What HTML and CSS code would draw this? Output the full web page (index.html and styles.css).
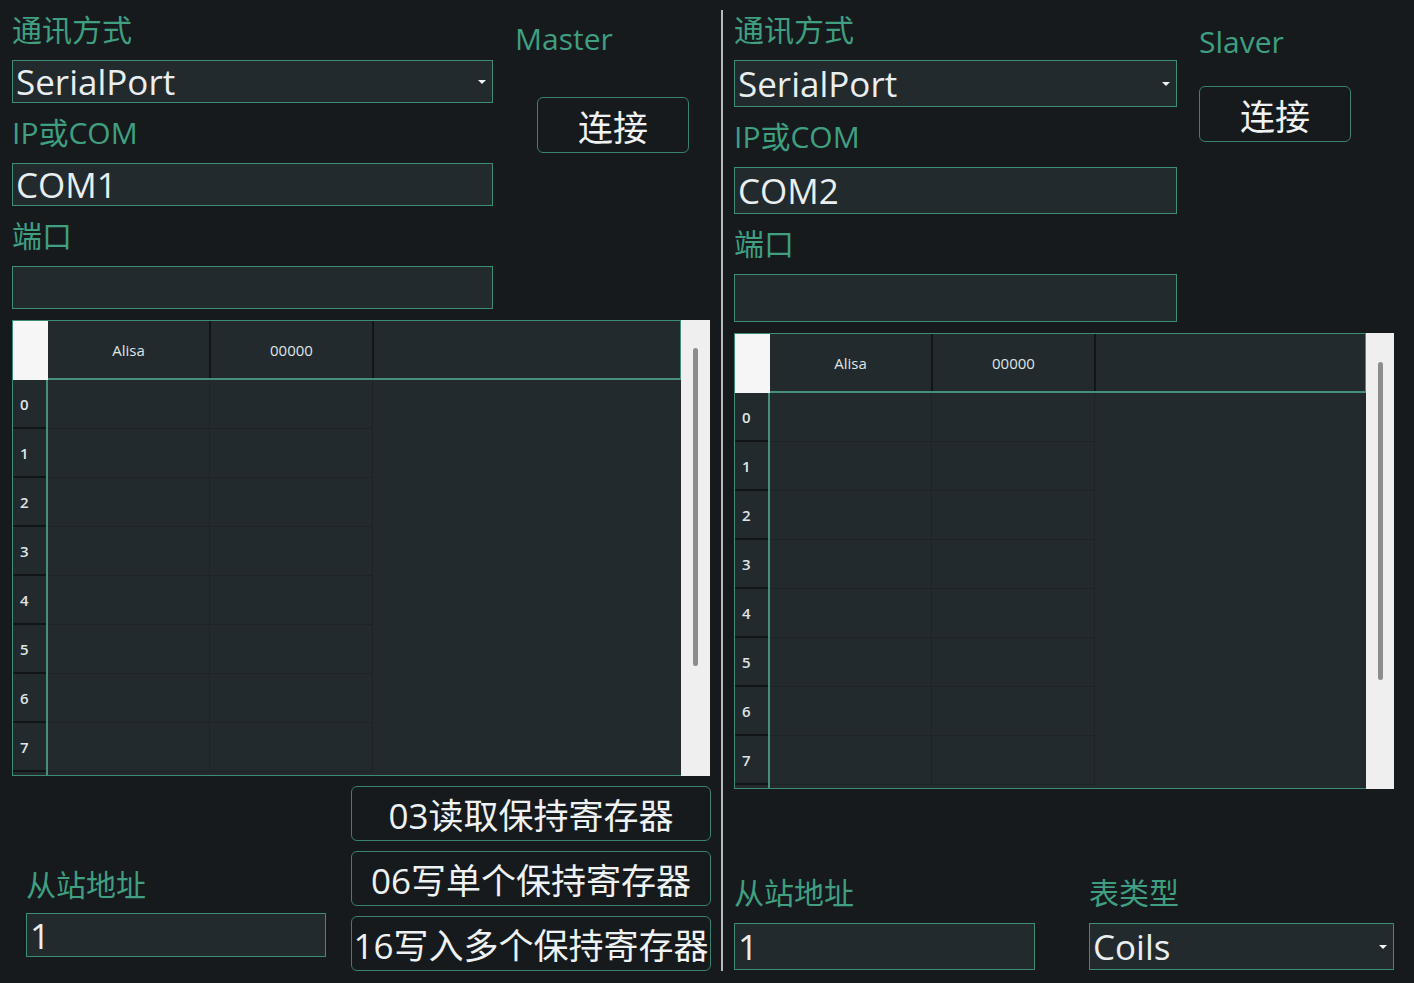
FILE: index.html
```html
<!DOCTYPE html>
<html lang="zh-CN">
<head>
<meta charset="utf-8">
<title>Modbus</title>
<link rel="stylesheet" href="styles.css">
</head>
<body>
<div class="app">
  <section class="panel panel-left">
    <div class="top">
      <div class="form form-left">
        <div class="lbl">通讯方式</div>
        <div class="box combo h43"><span class="val">SerialPort</span><span class="arrow"></span></div>
        <div class="lbl">IP或COM</div>
        <div class="box h43"><span class="val">COM1</span></div>
        <div class="lbl">端口</div>
        <div class="box h43"></div>
      </div>
      <div class="side side-left">
        <div class="role">Master</div>
        <button class="btn connect">连接</button>
      </div>
    </div>

    <div class="tbl tbl-left">
      <div class="grid">
        <div class="thead">
          <div class="corner"></div>
          <div class="hcells">
            <div class="hcell">Alisa</div>
            <div class="hcell">00000</div>
          </div>
        </div>
        <div class="tbody">
          <div class="rowhead">
            <div class="rh">0</div><div class="rh">1</div><div class="rh">2</div><div class="rh">3</div>
            <div class="rh">4</div><div class="rh">5</div><div class="rh">6</div><div class="rh">7</div><div class="rh"></div>
          </div>
          <div class="cells">
            <div class="cell"></div><div class="cell"></div>
            <div class="cell"></div><div class="cell"></div>
            <div class="cell"></div><div class="cell"></div>
            <div class="cell"></div><div class="cell"></div>
            <div class="cell"></div><div class="cell"></div>
            <div class="cell"></div><div class="cell"></div>
            <div class="cell"></div><div class="cell"></div>
            <div class="cell"></div><div class="cell"></div>
          </div>
        </div>
      </div>
      <div class="scroll"><div class="thumb"></div></div>
    </div>

    <div class="bottom bottom-left">
      <div class="addr">
        <div class="lbl lbl-addr">从站地址</div>
        <div class="box h44"><span class="val">1</span></div>
      </div>
      <div class="actions">
        <button class="btn act">03读取保持寄存器</button>
        <button class="btn act">06写单个保持寄存器</button>
        <button class="btn act">16写入多个保持寄存器</button>
      </div>
    </div>
  </section>

  <div class="divider"></div>

  <section class="panel panel-right">
    <div class="top">
      <div class="form form-right">
        <div class="lbl">通讯方式</div>
        <div class="box combo h47"><span class="val">SerialPort</span><span class="arrow"></span></div>
        <div class="lbl">IP或COM</div>
        <div class="box h47"><span class="val">COM2</span></div>
        <div class="lbl">端口</div>
        <div class="box h48"></div>
      </div>
      <div class="side side-right">
        <div class="role">Slaver</div>
        <button class="btn connect">连接</button>
      </div>
    </div>

    <div class="tbl tbl-right">
      <div class="grid">
        <div class="thead">
          <div class="corner"></div>
          <div class="hcells">
            <div class="hcell">Alisa</div>
            <div class="hcell">00000</div>
          </div>
        </div>
        <div class="tbody">
          <div class="rowhead">
            <div class="rh">0</div><div class="rh">1</div><div class="rh">2</div><div class="rh">3</div>
            <div class="rh">4</div><div class="rh">5</div><div class="rh">6</div><div class="rh">7</div><div class="rh"></div>
          </div>
          <div class="cells">
            <div class="cell"></div><div class="cell"></div>
            <div class="cell"></div><div class="cell"></div>
            <div class="cell"></div><div class="cell"></div>
            <div class="cell"></div><div class="cell"></div>
            <div class="cell"></div><div class="cell"></div>
            <div class="cell"></div><div class="cell"></div>
            <div class="cell"></div><div class="cell"></div>
            <div class="cell"></div><div class="cell"></div>
          </div>
        </div>
      </div>
      <div class="scroll"><div class="thumb"></div></div>
    </div>

    <div class="bottom bottom-right">
      <div class="fieldcol col-addr">
        <div class="lbl">从站地址</div>
        <div class="box h47"><span class="val">1</span></div>
      </div>
      <div class="fieldcol col-type">
        <div class="lbl">表类型</div>
        <div class="box combo h47"><span class="val">Coils</span><span class="arrow"></span></div>
      </div>
    </div>
  </section>
</div>
</body>
</html>
```

FILE: styles.css
```css
* { box-sizing: border-box; }

html, body {
  margin: 0;
  padding: 0;
  background: #161a1d;
}

body {
  width: 1414px;
  height: 983px;
  overflow: hidden;
  font-family: "Open Sans", "Noto Sans CJK SC", sans-serif;
  color: #e8eef0;
}

.app {
  display: flex;
  height: 983px;
}

.panel-left {
  width: 721px;
  flex: none;
  padding-left: 12px;
}

.divider {
  width: 2px;
  flex: none;
  margin-top: 10px;
  height: 961px;
  background: #b6babc;
}

.panel-right {
  flex: 1;
  padding-left: 11px;
}

.top {
  display: flex;
}

.form-left { width: 481px; flex: none; }
.form-right { width: 443px; flex: none; }

.lbl {
  height: 60px;
  line-height: 60px;
  font-size: 30px;
  color: #3f9f80;
  white-space: nowrap;
}

.box {
  background: #232a2d;
  border: 1px solid #3d8c77;
  display: flex;
  align-items: center;
  padding-left: 3px;
  font-size: 35px;
  font-weight: 500;
  color: #e9eff1;
  white-space: nowrap;
}

.h43 { height: 43px; }
.h44 { height: 44px; }
.h47 { height: 47px; }
.h48 { height: 48px; }

.combo .val { flex: 1; }

.arrow {
  width: 0;
  height: 0;
  border-left: 4px solid transparent;
  border-right: 4px solid transparent;
  border-top: 4px solid #f2f2f2;
  margin-right: 6px;
}

.side {
  margin-left: 22px;
  display: flex;
  flex-direction: column;
  align-items: flex-start;
}

.role {
  font-size: 30px;
  line-height: 40px;
  color: #3f9f80;
}

.side-left .role { margin-top: 19px; }
.side-right .role { margin-top: 22px; }

.btn {
  font-family: "Open Sans", "Noto Sans CJK SC", sans-serif;
  background: #161a1d;
  color: #eef2f3;
  border: 1px solid #3a8170;
  border-radius: 6px;
  padding: 0;
  display: flex;
  align-items: center;
  justify-content: center;
  white-space: nowrap;
  font-size: 35px;
}

.connect {
  width: 152px;
  height: 56px;
}

.side-left .connect { margin-left: 22px; margin-top: 38px; }
.side-right .connect { margin-top: 24px; }

/* table */
.tbl {
  display: flex;
  height: 456px;
  margin-top: 11px;
}

.tbl-left { width: 698px; }
.tbl-right { width: 660px; }

.grid {
  flex: 1;
  display: flex;
  flex-direction: column;
  border: 1px solid #3d8c77;
  border-right: none;
  background: #232a2d;
  overflow: hidden;
}

.thead {
  display: flex;
  height: 59px;
  flex: none;
}

.corner {
  width: 35px;
  flex: none;
  background: #f6f6f6;
}

.hcells {
  flex: 1;
  display: flex;
  border-bottom: 2px solid #468f7c;
  border-right: 1px solid #468f7c;
}

.hcell {
  width: 163px;
  flex: none;
  border-right: 2px solid #121517;
  display: flex;
  align-items: center;
  justify-content: center;
  font-size: 15px;
  font-weight: 500;
  color: #dfe5e7;
}

.tbody {
  flex: 1;
  display: flex;
  overflow: hidden;
}

.rowhead {
  width: 35px;
  flex: none;
  border-right: 2px solid #468f7c;
  display: flex;
  flex-direction: column;
}

.rh {
  height: 49px;
  flex: none;
  border-bottom: 2px solid #121517;
  padding-left: 7px;
  display: flex;
  align-items: center;
  font-size: 15px;
  font-weight: 600;
  color: #dfe5e7;
}

.cells {
  display: grid;
  grid-template-columns: 162px 163px;
  grid-auto-rows: 49px;
  align-content: start;
}

.cell {
  border-right: 1px solid #1d2326;
  border-bottom: 1px solid #1d2326;
}

.scroll {
  width: 29px;
  flex: none;
  background: #efefef;
  padding: 28px 0 0 12px;
}

.tbl-right .scroll { width: 28px; padding-top: 29px; }

.thumb {
  width: 5px;
  height: 318px;
  background: #8c8c8c;
  border-radius: 3px;
}

/* bottom */
.bottom-left {
  display: flex;
  margin-top: 10px;
  padding-left: 14px;
}

.addr {
  width: 300px;
  flex: none;
  padding-top: 70px;
}

.lbl-addr {
  height: 57px;
  line-height: 57px;
}

.actions {
  margin-left: 25px;
  width: 360px;
  display: flex;
  flex-direction: column;
  gap: 10px;
}

.act {
  height: 55px;
  width: 360px;
}

.bottom-right {
  display: flex;
  margin-top: 74px;
}

.col-addr { width: 301px; flex: none; }
.col-type { width: 305px; flex: none; margin-left: 54px; }
```
